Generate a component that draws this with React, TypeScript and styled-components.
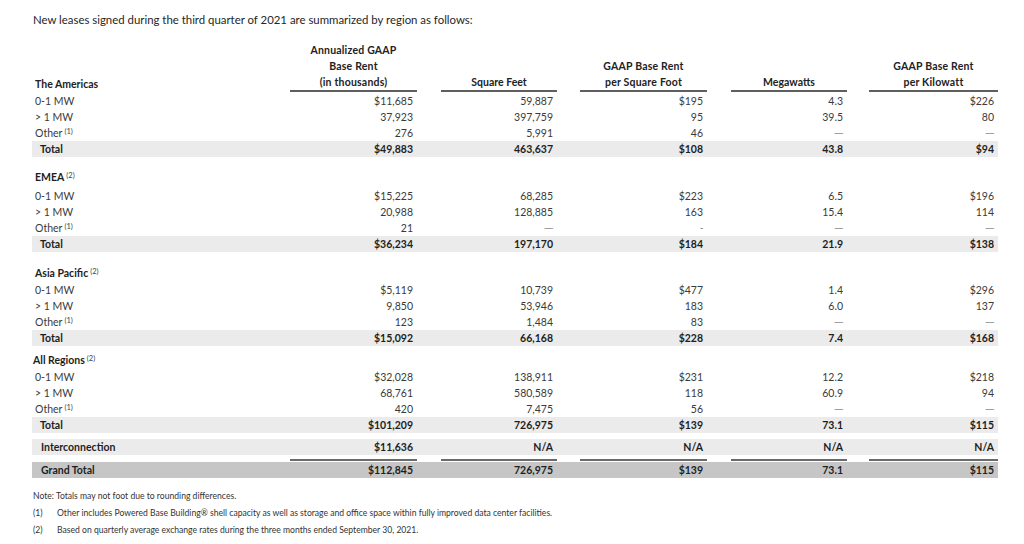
import styled, { createGlobalStyle } from 'styled-components';

const GlobalStyle = createGlobalStyle`
  body {
    margin: 0;
    background: #ffffff;
    font-family: Lato, "Liberation Sans", sans-serif;
    color: #2e2e2e;
  }
`;

// column tracks: label, then each numeric column ends at its rule's right edge
const COLS = '258px 127px 140px 150px 140px 151px';
const RULES = [127, 116, 127, 116, 129];

const Page = styled.div`
  width: 1024px;
  height: 544px;
  padding: 12px 0 0 32px;
  box-sizing: border-box;
  overflow: hidden;
`;

const Intro = styled.p`
  margin: 0 0 0 1px;
  font-size: 11.4px;
  line-height: 16px;
  color: #262626;
`;

const Table = styled.div`
  width: 966px;
  margin-top: 14px;
`;

const HeadRow = styled.div`
  display: grid;
  grid-template-columns: ${COLS};
  align-items: end;
  font-size: 10.5px;
  font-weight: 700;
  line-height: 16px;
  color: #222;
`;

const HeadCell = styled.div`
  display: flex;
  justify-content: flex-end;
`;

const HeadBox = styled.div<{ $w: number }>`
  width: ${p => p.$w}px;
  text-align: center;
  border-bottom: 2px solid #5f5f5f;
  letter-spacing: ${p => (p.$w > 120 ? '0.2px' : '0')};
`;

const RegionTitle = styled.div`
  padding-left: 3px;
`;

type Tone = 'plain' | 'total' | 'grand';

const Row = styled.div<{ $tone?: Tone; $mt?: number; $h?: number }>`
  display: grid;
  grid-template-columns: ${COLS};
  align-items: center;
  height: ${p => p.$h ?? 16}px;
  margin-top: ${p => p.$mt ?? 0}px;
  font-size: 10.5px;
  font-weight: ${p => (p.$tone && p.$tone !== 'plain' ? 700 : 400)};
  color: ${p => (p.$tone && p.$tone !== 'plain' ? '#1e1e1e' : '#3a3a3a')};
  background: ${p =>
    p.$tone === 'total' ? '#ebebeb' : p.$tone === 'grand' ? '#c6c6c6' : 'transparent'};
`;

const Label = styled.div<{ $indent?: number; $bold?: boolean }>`
  padding-left: ${p => p.$indent ?? 3}px;
  font-weight: ${p => (p.$bold ? 700 : 'inherit')};
  color: ${p => (p.$bold ? '#1e1e1e' : 'inherit')};
  white-space: nowrap;
`;

const Value = styled.div<{ $dash?: boolean }>`
  text-align: right;
  padding-right: 4px;
  color: ${p => (p.$dash ? '#555' : 'inherit')};
  font-family: ${p => (p.$dash ? '"Liberation Sans", sans-serif' : 'inherit')};
  font-size: ${p => (p.$dash ? '8.5px' : 'inherit')};
`;

const Sup = styled.span`
  font-size: 7.5px;
  font-weight: 400;
  vertical-align: 3px;
  margin-left: 2px;
  color: #444;
`;

const RuleRow = styled.div`
  display: grid;
  grid-template-columns: ${COLS};
  height: 2px;
  margin-top: 4px;
`;

const RuleCell = styled.div`
  display: flex;
  justify-content: flex-end;
`;

const Rule = styled.div<{ $w: number }>`
  width: ${p => p.$w}px;
  height: 2px;
  background: #6a6a6a;
`;

const Notes = styled.div`
  margin-top: 10px;
  font-size: 8.6px;
  line-height: 17px;
  color: #333;
`;

const NoteLine = styled.div`
  display: flex;
  padding-left: 1px;
`;

const NoteNum = styled.span`
  width: 24px;
  flex: none;
`;

type Line = { label: string; sup?: string; vals: string[] };
type Section = {
  title: string;
  sup?: string;
  titleMt: number;
  firstMt: number;
  lines: Line[];
  total: string[];
};

const DASH = '—';

const sections: Section[] = [
  {
    title: 'EMEA',
    sup: '(2)',
    titleMt: 12,
    firstMt: 3,
    lines: [
      { label: '0-1 MW', vals: ['$15,225', '68,285', '$223', '6.5', '$196'] },
      { label: '> 1 MW', vals: ['20,988', '128,885', '163', '15.4', '114'] },
      { label: 'Other', sup: '(1)', vals: ['21', DASH, '-', DASH, DASH] },
    ],
    total: ['$36,234', '197,170', '$184', '21.9', '$138'],
  },
  {
    title: 'Asia Pacific',
    sup: '(2)',
    titleMt: 13,
    firstMt: 1,
    lines: [
      { label: '0-1 MW', vals: ['$5,119', '10,739', '$477', '1.4', '$296'] },
      { label: '> 1 MW', vals: ['9,850', '53,946', '183', '6.0', '137'] },
      { label: 'Other', sup: '(1)', vals: ['123', '1,484', '83', DASH, DASH] },
    ],
    total: ['$15,092', '66,168', '$228', '7.4', '$168'],
  },
  {
    title: 'All Regions',
    sup: '(2)',
    titleMt: 6,
    firstMt: 1,
    lines: [
      { label: '0-1 MW', vals: ['$32,028', '138,911', '$231', '12.2', '$218'] },
      { label: '> 1 MW', vals: ['68,761', '580,589', '118', '60.9', '94'] },
      { label: 'Other', sup: '(1)', vals: ['420', '7,475', '56', DASH, DASH] },
    ],
    total: ['$101,209', '726,975', '$139', '73.1', '$115'],
  },
];

const americas: Line[] = [
  { label: '0-1 MW', vals: ['$11,685', '59,887', '$195', '4.3', '$226'] },
  { label: '> 1 MW', vals: ['37,923', '397,759', '95', '39.5', '80'] },
  { label: 'Other', sup: '(1)', vals: ['276', '5,991', '46', DASH, DASH] },
];

const Values = ({ vals }: { vals: string[] }) => (
  <>
    {vals.map((v, i) => (
      <Value key={i} $dash={v === DASH || v === '-'}>
        {v}
      </Value>
    ))}
  </>
);

const DataLines = ({ lines, firstMt }: { lines: Line[]; firstMt: number }) => (
  <>
    {lines.map((l, i) => (
      <Row key={l.label} $mt={i === 0 ? firstMt : 0}>
        <Label>
          {l.label}
          {l.sup && <Sup>{l.sup}</Sup>}
        </Label>
        <Values vals={l.vals} />
      </Row>
    ))}
  </>
);

const TotalRow = ({ vals }: { vals: string[] }) => (
  <Row $tone="total">
    <Label $indent={8}>Total</Label>
    <Values vals={vals} />
  </Row>
);

export default function App() {
  return (
    <Page>
      <GlobalStyle />
      <Intro>New leases signed during the third quarter of 2021 are summarized by region as follows:</Intro>
      <Table>
        <HeadRow>
          <RegionTitle>The Americas</RegionTitle>
          <HeadCell>
            <HeadBox $w={RULES[0]}>
              Annualized GAAP
              <br />
              Base Rent
              <br />
              (in thousands)
            </HeadBox>
          </HeadCell>
          <HeadCell>
            <HeadBox $w={RULES[1]}>Square Feet</HeadBox>
          </HeadCell>
          <HeadCell>
            <HeadBox $w={RULES[2]}>
              GAAP Base Rent
              <br />
              per Square Foot
            </HeadBox>
          </HeadCell>
          <HeadCell>
            <HeadBox $w={RULES[3]}>Megawatts</HeadBox>
          </HeadCell>
          <HeadCell>
            <HeadBox $w={RULES[4]}>
              GAAP Base Rent
              <br />
              per Kilowatt
            </HeadBox>
          </HeadCell>
        </HeadRow>

        <DataLines lines={americas} firstMt={1} />
        <TotalRow vals={['$49,883', '463,637', '$108', '43.8', '$94']} />

        {sections.map(s => (
          <div key={s.title}>
            <Row $mt={s.titleMt}>
              <Label $bold $indent={s.title === 'All Regions' ? 1 : 3}>
                {s.title}
                {s.sup && <Sup>{s.sup}</Sup>}
              </Label>
            </Row>
            <DataLines lines={s.lines} firstMt={s.firstMt} />
            <TotalRow vals={s.total} />
          </div>
        ))}

        <Row $tone="total" $mt={6}>
          <Label $indent={9}>Interconnection</Label>
          <Values vals={['$11,636', 'N/A', 'N/A', 'N/A', 'N/A']} />
        </Row>

        <RuleRow>
          <div />
          {RULES.map((w, i) => (
            <RuleCell key={i}>
              <Rule $w={w} />
            </RuleCell>
          ))}
        </RuleRow>

        <Row $tone="grand" $mt={1}>
          <Label $indent={9}>Grand Total</Label>
          <Values vals={['$112,845', '726,975', '$139', '73.1', '$115']} />
        </Row>
      </Table>

      <Notes>
        <NoteLine>Note: Totals may not foot due to rounding differences.</NoteLine>
        <NoteLine>
          <NoteNum>(1)</NoteNum>
          Other includes Powered Base Building® shell capacity as well as storage and office space within fully
          improved data center facilities.
        </NoteLine>
        <NoteLine>
          <NoteNum>(2)</NoteNum>
          Based on quarterly average exchange rates during the three months ended September 30, 2021.
        </NoteLine>
      </Notes>
    </Page>
  );
}
